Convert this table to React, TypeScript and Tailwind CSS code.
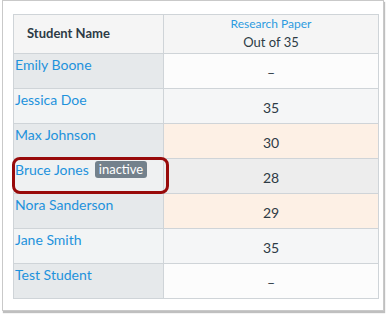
const rows = [
  { name: "Emily Boone", score: "–", left: "bg-[#e6e9eb]", right: "bg-[#fcfcfc]" },
  { name: "Jessica Doe", score: "35", left: "bg-[#f2f4f5]", right: "bg-[#f5f6f7]" },
  { name: "Max Johnson", score: "30", left: "bg-[#e6e9eb]", right: "bg-[#fdf0e5]" },
  { name: "Bruce Jones", score: "28", left: "bg-[#eff1f2]", right: "bg-[#ededed]", inactive: true },
  { name: "Nora Sanderson", score: "29", left: "bg-[#e6e9eb]", right: "bg-[#fdf0e5]" },
  { name: "Jane Smith", score: "35", left: "bg-[#f2f4f5]", right: "bg-[#f5f6f7]" },
  { name: "Test Student", score: "–", left: "bg-[#e6e9eb]", right: "bg-[#fcfcfc]" },
];

export default function App() {
  return (
    <div className="h-[314px] w-[386px] bg-white font-['Lato','Liberation_Sans',sans-serif]">
      <div className="ml-[2px] h-[311px] w-[382px] border border-[#c9c9c9] bg-white pl-[10px] pt-[13px] shadow-[1px_2px_1px_rgba(0,0,0,0.25)]">

        <table className="w-[365px] table-fixed border-collapse">
          <thead>
            <tr className="h-[38px] bg-[#f5f5f5]">
              <th className="w-[150px] border border-[#cfd4d8] pl-[13px] text-left text-[13px] font-bold text-[#2d3b45]">
                Student Name
              </th>
              <th className="w-[215px] border border-[#cfd4d8] pb-[2px] text-center font-normal leading-[18px]">
                <div className="text-[12px] text-[#2d9be0]">Research Paper</div>
                <div className="text-[13px] text-[#2d3b45]">Out of 35</div>
              </th>
            </tr>
          </thead>

          <tbody>
            {rows.map((r) => (
              <tr key={r.name} className="h-[35px]">
                <td className={`relative border border-[#cfd4d8] pb-[13px] pl-[1px] align-middle ${r.left}`}>
                  <div className="flex items-center gap-[6px]">
                    <span className="text-[14px] text-[#1e92dc]">{r.name}</span>

                    {r.inactive && (
                      <span className="rounded-[3px] bg-[#73818c] px-[4px] text-[13px] leading-[17px] text-white">
                        inactive
                      </span>
                    )}
                  </div>

                  {r.inactive && (
                    <div className="absolute left-[-2px] top-[-2px] h-[37px] w-[157px] rounded-[8px] border-[3px] border-[#980a0a]" />
                  )}
                </td>
                <td className={`border border-[#cfd4d8] pt-[3px] text-center text-[14px] text-[#2d3b45] ${r.right}`}>
                  {r.score}
                </td>
              </tr>
            ))}
          </tbody>
        </table>

      </div>
    </div>
  );
}
